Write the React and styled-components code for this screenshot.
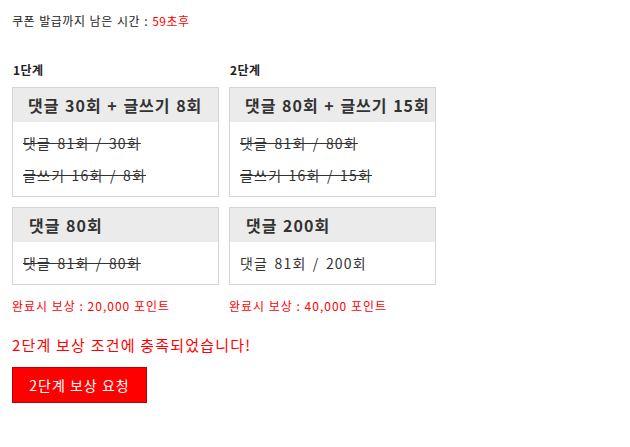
import React from "react";
import styled, { createGlobalStyle } from "styled-components";

const Global = createGlobalStyle`
  html, body { margin: 0; padding: 0; background: #fff; }
  body { font-family: "Noto Sans CJK KR", "Noto Sans", sans-serif; color: #333; }
`;

const Page = styled.div`
  padding: 12px 12px;
`;

const Timer = styled.div`
  font-size: 12px;
  line-height: 16px;
  color: #222;
  margin-top: 1px;
  letter-spacing: 0.5px;
  word-spacing: 1px;
`;

const Red = styled.span`
  color: #ff0000;
`;

const Stages = styled.div`
  display: flex;
  gap: 10px;
  margin-top: 33px;
`;

const Column = styled.div`
  width: 207px;
  display: flex;
  flex-direction: column;
`;

const StageTitle = styled.div`
  font-size: 12px;
  font-weight: 700;
  line-height: 16px;
  color: #222;
  margin-bottom: 9px;
  padding-left: 1px;
  letter-spacing: 0.5px;
`;

const Box = styled.div`
  border: 1px solid #d5d5d5;
  margin-bottom: 10px;
`;

const BoxHeader = styled.div`
  background: #ebebeb;
  height: 34px;
  line-height: 34px;
  padding-left: ${(p) => p.$indent}px;
  font-size: 16px;
  font-weight: 700;
  color: #333;
  letter-spacing: 1px;
  word-spacing: 1px;
  white-space: nowrap;
`;

const BoxBody = styled.div`
  padding: 5px 10px;
`;

const Line = styled.div`
  height: 32px;
  line-height: 32px;
  font-size: 14px;
  color: #333;
  word-spacing: 2px;
  letter-spacing: 1.2px;
  text-decoration: ${(p) => (p.$done ? "line-through" : "none")};
`;

const Reward = styled.div`
  font-size: 12px;
  line-height: 16px;
  color: #ff0000;
  margin-top: 3px;
  letter-spacing: 1px;
`;

const Message = styled.div`
  font-size: 15px;
  line-height: 20px;
  color: #ff0000;
  margin-top: 21px;
  letter-spacing: 1.2px;
`;

const Button = styled.button`
  margin-top: 12px;
  width: 135px;
  height: 36px;
  background: #ff0000;
  border: 1px solid #c00000;
  color: #fff;
  font-family: inherit;
  font-size: 14px;
  letter-spacing: 1px;
  padding: 0;
  cursor: pointer;
`;

const stages = [
  {
    title: "1단계",
    reward: "완료시 보상 : 20,000 포인트",
    boxes: [
      {
        head: "댓글 30회 + 글쓰기 8회",
        indent: 15,
        lines: [
          { t: "댓글 81회 / 30회", done: true },
          { t: "글쓰기 16회 / 8회", done: true },
        ],
      },
      {
        head: "댓글 80회",
        indent: 16,
        lines: [{ t: "댓글 81회 / 80회", done: true }],
      },
    ],
  },
  {
    title: "2단계",
    reward: "완료시 보상 : 40,000 포인트",
    boxes: [
      {
        head: "댓글 80회 + 글쓰기 15회",
        indent: 15,
        lines: [
          { t: "댓글 81회 / 80회", done: true },
          { t: "글쓰기 16회 / 15회", done: true },
        ],
      },
      {
        head: "댓글 200회",
        indent: 16,
        lines: [{ t: "댓글 81회 / 200회", done: false }],
      },
    ],
  },
];

export default function App() {
  return (
    <>
      <Global />
      <Page>
        <Timer>
          쿠폰 발급까지 남은 시간 : <Red>59초후</Red>
        </Timer>
        <Stages>
          {stages.map((s) => (
            <Column key={s.title}>
              <StageTitle>{s.title}</StageTitle>
              {s.boxes.map((b) => (
                <Box key={b.head}>
                  <BoxHeader $indent={b.indent}>{b.head}</BoxHeader>
                  <BoxBody>
                    {b.lines.map((l) => (
                      <Line key={l.t} $done={l.done}>
                        {l.t}
                      </Line>
                    ))}
                  </BoxBody>
                </Box>
              ))}
              <Reward>{s.reward}</Reward>
            </Column>
          ))}
        </Stages>
        <Message>2단계 보상 조건에 충족되었습니다!</Message>
        <Button>2단계 보상 요청</Button>
      </Page>
    </>
  );
}
